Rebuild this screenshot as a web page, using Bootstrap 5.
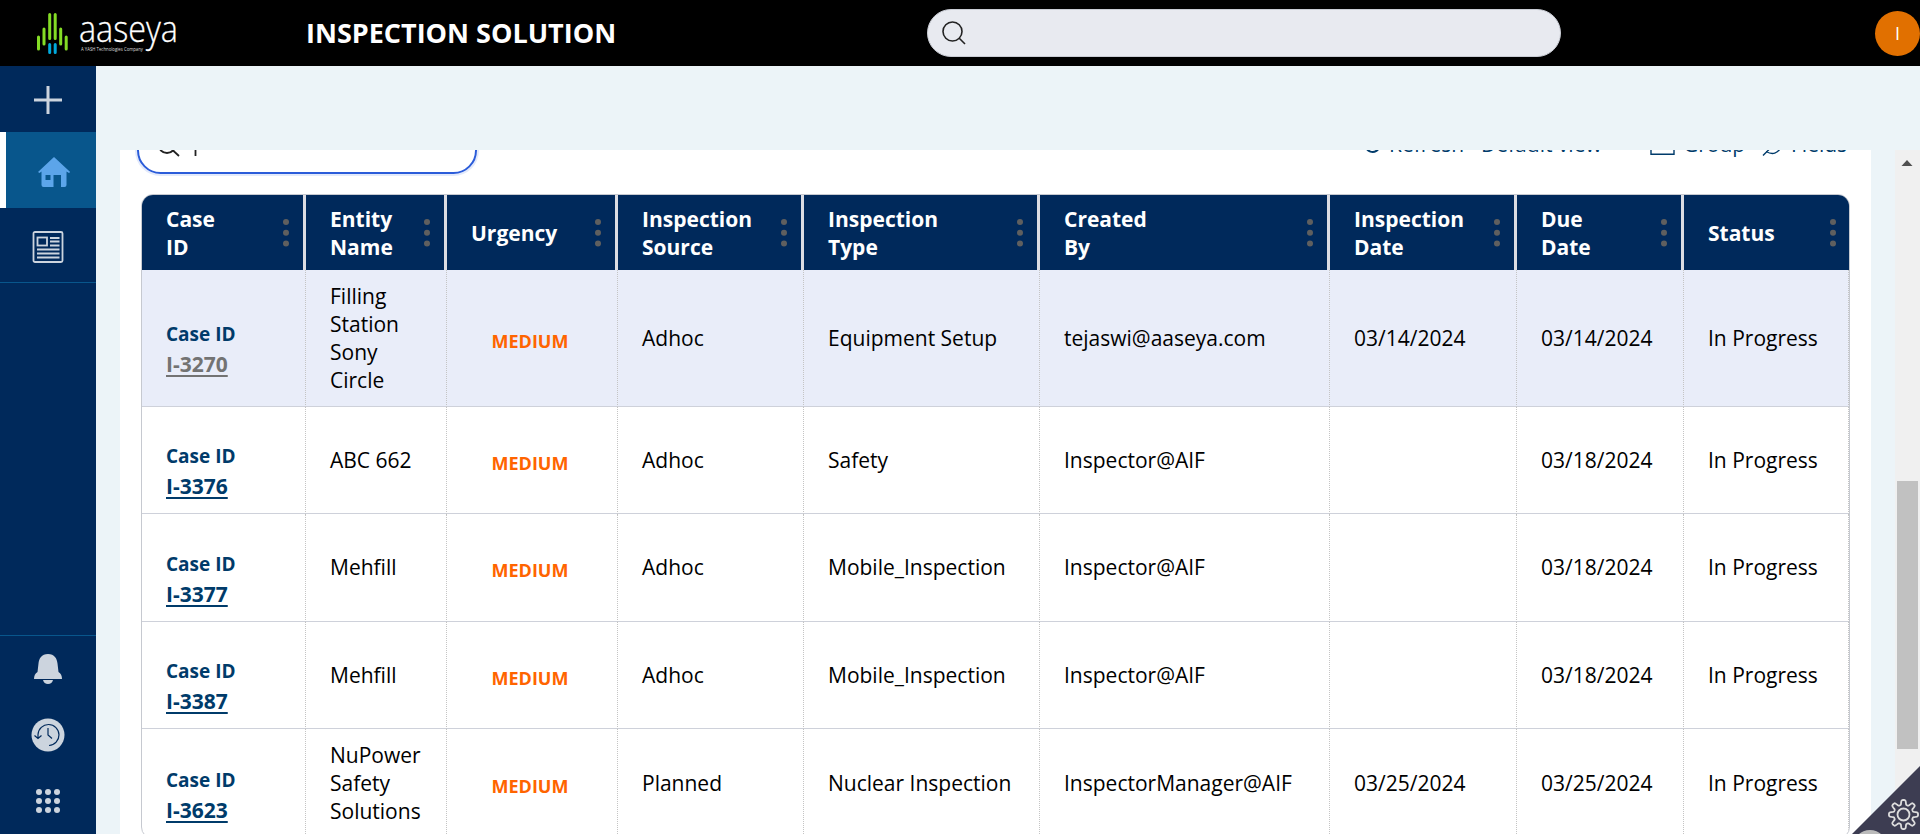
<!DOCTYPE html>
<html lang="en">
<head>
<meta charset="utf-8">
<title>Inspection Solution</title>
<link href="https://cdn.jsdelivr.net/npm/bootstrap@5.3.0/dist/css/bootstrap.min.css" rel="stylesheet">
<script src="https://cdn.jsdelivr.net/npm/bootstrap@5.3.0/dist/js/bootstrap.bundle.min.js"></script>
<style>
body{font-family:"Open Sans","Noto Sans",sans-serif;background:#ecf4f8;color:#000;height:834px}
.topbar{height:66px;background:#000;color:#fff}
.brand{width:306px;padding-left:36px}
.app-title{font-size:27px;font-weight:700;line-height:36px;margin:0}
.global-search{width:634px;height:48px;margin-left:auto;margin-right:314px;background:#e8eaf0;border:1px solid #c9ccd4;border-radius:24px;padding-left:13px}
.avatar{width:45px;height:45px;background:#e17000;color:#fff;font-size:18px}
.side{width:96px;background:#00295b}
.side a{display:flex;align-items:center;justify-content:center}
.side .add{height:66px;padding-top:2px}
.side .home{height:76px;background:#08568c;border-left:6px solid #fff;padding:4px 0 0 6px}
.side .docs{height:75px;border-bottom:1px solid #08568c;padding-top:4px}
.side .tools{border-top:1px solid #08568c;height:199px}
.side .tools a{height:66px}
.scroller{margin-top:84px}
.panel{margin-left:24px;width:1751px;background:#fff;padding-left:18px}
.filter-clip{height:44px;overflow:hidden;margin-left:-4px;padding-left:3px}
.filter-box{width:340px;height:47px;margin-top:-23px;border:2px solid #2b5cd9;border-radius:30px;box-shadow:0 0 0 2px #e3eafb;padding:0 0 0 18px}
.tool-links{margin-top:-20px;margin-right:23px;font-size:21px;line-height:28px;height:34px;color:#003b6a}
.tool-links span{white-space:nowrap}
.tool-links svg{fill:none;stroke:#003b6a;stroke-width:1.4}
.grid-frame{width:1709px;margin-left:3px;border:1px solid #c6c9d0;border-radius:12px;overflow:hidden}
.cases{table-layout:fixed;width:1707px;border-collapse:separate;border-spacing:0;font-size:21px;line-height:28px;margin:0}
.cases th{background:#00295b;color:#fff;height:75px;padding:0 14px 0 24px;border-right:3px solid #dcdde3;vertical-align:middle}
.cases th:last-child{border-right:0}
.cases th:last-child{padding-right:13px}
.cases td{padding:0 0 1px 24px;border-right:1px dotted #c4c4c4;border-bottom:1px solid #ced1da;vertical-align:middle}
.cases tr:last-child td{padding-bottom:0}
.cases tr.active td{background:#e9edf9}
.case-ref{font-size:19px;font-weight:700;color:#003b6a;line-height:31px;padding-top:23px}
.case-ref div{height:30px}
.case-ref a{font-size:21px;color:#003b6a;text-underline-offset:3px;text-decoration-thickness:2px}
.active .case-ref a{color:#737373}
.cases td.urg{color:#ff6400;font-weight:700;font-size:18px;text-align:center;padding:5px 4px 0 0}
.cases tr:last-child td.urg{padding-top:6px}
.scrollbar-track{width:25px;background:#f0f0f0;margin-left:auto;padding:10px 2px 0 2px}
.scroll-thumb{height:268px;width:21px;background:#c1c1c1;margin-top:311px}
.corner{right:0;bottom:0}
</style>
</head>
<body class="d-flex flex-column overflow-hidden position-relative">
<svg class="d-none"><symbol id="dots" viewBox="0 0 6 28"><circle cx="3" cy="3" r="3"/><circle cx="3" cy="13.8" r="3"/><circle cx="3" cy="24.5" r="3"/></symbol></svg>
<header class="topbar d-flex align-items-center flex-shrink-0">
  <div class="brand">
    <svg width="146" height="66" viewBox="0 0 146 66" class="d-block">
      <g stroke-width="3" stroke-linecap="round" fill="none"><path stroke="#84dc25" d="M2.500 37V49M8 29V44M13.700 14.500V38.500M19.200 14.500V38.500M24.700 29V44M30.200 37V49"/><path stroke="#00a9dc" d="M13.700 44.500V52.500M19.200 44.500V52.500"/></g>
      <text x="43" y="42" font-size="36" fill="#fff" font-family="Open Sans" font-weight="300" stroke="#fff" stroke-width=".3" textLength="99" lengthAdjust="spacingAndGlyphs">aaseya</text>
      <text x="45" y="51" font-size="5" fill="#ddd" font-family="Open Sans" textLength="62" lengthAdjust="spacingAndGlyphs">A YASH Technologies Company</text>
    </svg>
  </div>
  <h1 class="app-title">INSPECTION SOLUTION</h1>
  <div class="global-search d-flex align-items-center"><svg width="26" height="26" viewBox="0 0 26 26" fill="none" stroke="#222" stroke-width="1.600"><circle cx="11.500" cy="11.500" r="9.500"/><path d="M18 18l6 6"/></svg></div>
  <div class="avatar rounded-circle d-flex align-items-center justify-content-center">I</div>
</header>
<div class="d-flex flex-shrink-0" style="height:768px">
  <nav class="side d-flex flex-column flex-shrink-0">
    <a class="add"><svg width="28" height="28" viewBox="0 0 28 28" stroke="#ccd4de" stroke-width="3"><path d="M14 0V28M0 14H28"/></svg></a>
    <a class="home"><svg width="34" height="32" viewBox="0 0 34 32" fill="#5ca5ea"><path fill-rule="evenodd" d="M17 1L1 16l1.500 1L4.500 15.500V29q0 2 2 2H16.500V19H24V31h3.500q2 0 2-2V15.500L32 17l1.200-1zM8.500 19h5v5h-5z"/></svg></a>
    <a class="docs"><svg width="32" height="32" viewBox="0 0 32 32" fill="none" stroke="#ccd4de" stroke-width="1.800"><rect x="1.500" y="1" width="29" height="30" rx="1.500"/><rect x="5.500" y="6.500" width="9.500" height="8"/><path d="M18 7H27.500M18 10.500H27.500M18 14.500H27.500M5 18.500H27.500M5 22.500H27.500M5 26.500H27.500"/></svg></a>
    <div class="tools mt-auto">
      <a><svg width="28" height="30" viewBox="0 0 28 30" fill="#ccd4de"><path d="M14 0C7.500 0 5 4.500 4.500 9.500L3.500 18Q0 20 0 25H28Q28 20 24.500 18L23.500 9.500C23 4.500 20.500 0 14 0zM9 26H19Q18 30 14 30T9 26z"/></svg></a>
      <a><svg width="34" height="34" viewBox="0 0 34 34"><circle cx="17" cy="17" r="16.500" fill="#ccd4de"/><path fill="none" stroke="#00295b" stroke-width="1.200" d="M7 20V16.500A10.500 10.500 0 1 1 18 27.500M3.500 17.500L7 20.500 10.500 17.500M17 10V17L21 20.500"/></svg></a>
      <a><svg width="24" height="24" viewBox="0 0 24 24" fill="#ccd4de"><circle cx="3" cy="3" r="3"/><circle cx="12" cy="3" r="3"/><circle cx="21" cy="3" r="3"/><circle cx="3" cy="12" r="3"/><circle cx="12" cy="12" r="3"/><circle cx="21" cy="12" r="3"/><circle cx="3" cy="21" r="3"/><circle cx="12" cy="21" r="3"/><circle cx="21" cy="21" r="3"/></svg></a>
    </div>
  </nav>
  <main class="scroller d-flex flex-grow-1">
    <section class="panel">
      <div class="filter-clip d-flex justify-content-between">
        <div class="filter-box d-flex"><svg width="60" height="47" viewBox="0 0 60 47" fill="none" stroke="#222" stroke-width="1.800"><circle cx="10" cy="15.500" r="8.500"/><path d="M15 20.500L22 27M38.500 12V27"/></svg></div>
        <div class="tool-links d-flex align-items-start">
          <svg width="25" height="34" viewBox="0 0 25 34"><path d="M2.500 11.500A7 7 0 1 0 8 8" stroke-width="2"/></svg>
          <span style="width:92px">Refresh</span><span style="width:169px">Default view</span>
          <svg width="33" height="34" viewBox="0 0 33 34"><path d="M1 8H24V24.300H1z"/></svg><span style="width:78px">Group</span>
          <svg width="30" height="34" viewBox="0 0 30 34"><path d="M2 25.500L9 18.500M5 21.500Q15 27 20 17"/></svg><span style="width:57px">Fields</span>
        </div>
      </div>
      <div class="grid-frame">
      <table class="cases">
        <colgroup><col style="width:164px"><col style="width:141px"><col style="width:171px"><col style="width:186px"><col style="width:236px"><col style="width:290px"><col style="width:187px"><col style="width:167px"><col style="width:165px"></colgroup>
        <thead><tr>
          <th><div class="d-flex justify-content-between align-items-center"><span>Case<br>ID</span><svg width="6" height="28" fill="#5f5f5f"><use href="#dots"/></svg></div></th>
          <th><div class="d-flex justify-content-between align-items-center"><span>Entity<br>Name</span><svg width="6" height="28" fill="#5f5f5f"><use href="#dots"/></svg></div></th>
          <th><div class="d-flex justify-content-between align-items-center"><span>Urgency</span><svg width="6" height="28" fill="#5f5f5f"><use href="#dots"/></svg></div></th>
          <th><div class="d-flex justify-content-between align-items-center"><span>Inspection<br>Source</span><svg width="6" height="28" fill="#5f5f5f"><use href="#dots"/></svg></div></th>
          <th><div class="d-flex justify-content-between align-items-center"><span>Inspection<br>Type</span><svg width="6" height="28" fill="#5f5f5f"><use href="#dots"/></svg></div></th>
          <th><div class="d-flex justify-content-between align-items-center"><span>Created<br>By</span><svg width="6" height="28" fill="#5f5f5f"><use href="#dots"/></svg></div></th>
          <th><div class="d-flex justify-content-between align-items-center"><span>Inspection<br>Date</span><svg width="6" height="28" fill="#5f5f5f"><use href="#dots"/></svg></div></th>
          <th><div class="d-flex justify-content-between align-items-center"><span>Due<br>Date</span><svg width="6" height="28" fill="#5f5f5f"><use href="#dots"/></svg></div></th>
          <th><div class="d-flex justify-content-between align-items-center"><span>Status</span><svg width="6" height="28" fill="#5f5f5f"><use href="#dots"/></svg></div></th>
        </tr></thead>
        <tbody>
        <tr class="active" style="height:137px"><td><div class="case-ref"><div>Case ID</div><div><a href="#">I-3270</a></div></div></td><td>Filling<br>Station<br>Sony<br>Circle</td><td class="urg">MEDIUM</td><td>Adhoc</td><td>Equipment Setup</td><td>tejaswi@aaseya.com</td><td>03/14/2024</td><td>03/14/2024</td><td>In Progress</td></tr>
        <tr style="height:107px"><td><div class="case-ref"><div>Case ID</div><div><a href="#">I-3376</a></div></div></td><td>ABC 662</td><td class="urg">MEDIUM</td><td>Adhoc</td><td>Safety</td><td>Inspector@AIF</td><td></td><td>03/18/2024</td><td>In Progress</td></tr>
        <tr style="height:108px"><td><div class="case-ref"><div>Case ID</div><div><a href="#">I-3377</a></div></div></td><td>Mehfill</td><td class="urg">MEDIUM</td><td>Adhoc</td><td>Mobile_Inspection</td><td>Inspector@AIF</td><td></td><td>03/18/2024</td><td>In Progress</td></tr>
        <tr style="height:107px"><td><div class="case-ref"><div>Case ID</div><div><a href="#">I-3387</a></div></div></td><td>Mehfill</td><td class="urg">MEDIUM</td><td>Adhoc</td><td>Mobile_Inspection</td><td>Inspector@AIF</td><td></td><td>03/18/2024</td><td>In Progress</td></tr>
        <tr style="height:109px"><td><div class="case-ref"><div>Case ID</div><div><a href="#">I-3623</a></div></div></td><td>NuPower<br>Safety<br>Solutions</td><td class="urg">MEDIUM</td><td>Planned</td><td>Nuclear Inspection</td><td>InspectorManager@AIF</td><td>03/25/2024</td><td>03/25/2024</td><td>In Progress</td></tr>
        </tbody>
      </table>
      </div>
    </section>
    <div class="scrollbar-track"><svg width="20" height="10" viewBox="0 0 20 10" class="d-block"><path d="M4.500 6L10 0 15.500 6z" fill="#505050"/></svg><div class="scroll-thumb"></div></div>
  </main>
</div>
<svg class="corner position-absolute" width="68" height="68" viewBox="0 0 68 68"><path d="M0 68L68 0V68z" fill="#3d3d52"/><circle cx="18" cy="81" r="17" fill="#bbb"/><g fill="none" stroke="#ddd" stroke-width="1.800"><circle cx="51.500" cy="48.500" r="6"/><path id="gear"/></g></svg>
<script>
// Eight-lobed outline of the settings gear
const pts=[];
for(let i=0;i<=160;i++){const a=i/160*Math.PI*2,r=12.2+2.4*Math.tanh(2.2*Math.cos(8*a));pts.push((51.5+r*Math.cos(a)).toFixed(2)+' '+(48.5+r*Math.sin(a)).toFixed(2));}
document.getElementById('gear').setAttribute('d','M'+pts.join('L')+'Z');
</script>
</body>
</html>
